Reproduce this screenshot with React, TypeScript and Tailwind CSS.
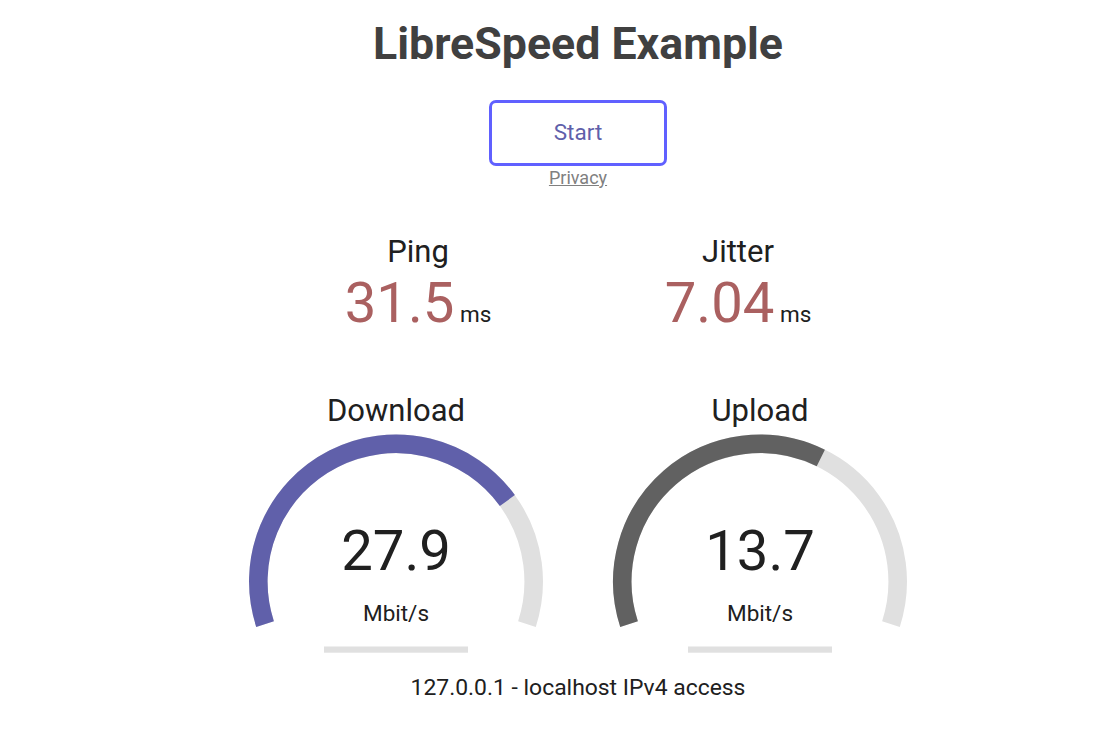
import React from 'react';

// mbps -> fraction of the meter, same curve as the speedtest page
const toAmount = (mbps: number) => 1 - 1 / Math.pow(1.3, Math.sqrt(mbps));

const W = 360;
const H = 281.25;
const scale = H * 0.0055;
const lw = 12 * scale;
const cx = W / 2;
const cy = H - 58 * scale;
const r = H / 1.8 - lw;

function arcPath(from: number, to: number) {
  const x0 = cx + r * Math.cos(from);
  const y0 = cy + r * Math.sin(from);
  const x1 = cx + r * Math.cos(to);
  const y1 = cy + r * Math.sin(to);
  const large = to - from > Math.PI ? 1 : 0;
  return `M ${x0} ${y0} A ${r} ${r} 0 ${large} 1 ${x1} ${y1}`;
}

function Meter({ amount, color }: { amount: number; color: string }) {
  const start = -Math.PI * 1.1;
  const end = Math.PI * 0.1;
  const fgEnd = amount * Math.PI * 1.2 - Math.PI * 1.1;
  return (
    <svg className="absolute inset-0" width={W} height={H} viewBox={`0 0 ${W} ${H}`}>
      <path d={arcPath(start, end)} fill="none" stroke="#E0E0E0" strokeWidth={lw} />
      <path d={arcPath(start, fgEnd)} fill="none" stroke={color} strokeWidth={lw} />
      <rect x={W * 0.3} y={H - 16 * scale} width={W * 0.4} height={4 * scale} fill="#E0E0E0" />
    </svg>
  );
}

function Gauge({ name, value, color }: { name: string; value: number; color: string }) {
  return (
    <div className="relative w-[360px] h-[281px]">
      <Meter amount={toAmount(value)} color={color} />
      <div className="relative">
        <div className="mt-[2px] text-[31px] leading-[37px]">{name}</div>
        <div className="mt-[89px] text-[56.25px] leading-[66px]">{value}</div>
        <div className="mt-[16px] leading-[26px]">Mbit/s</div>
      </div>
    </div>
  );
}

function SmallStat({ name, value }: { name: string; value: string }) {
  return (
    <div className="w-[315px] h-[157px]">
      <div className="text-[31px] leading-[37px]">{name}</div>
      <div className="leading-[66px]">
        <span className="text-[56.25px] text-[#AA6060]">{value}</span> <span>ms</span>
      </div>
    </div>
  );
}

export default function App() {
  return (
    <div className="w-full min-h-screen bg-white pl-[52px] pt-[18px] text-center text-[22.5px] text-[#202020] font-['Roboto',sans-serif]">
      <h1 className="text-[44.7px] leading-[52px] font-bold text-[#404040]">LibreSpeed Example</h1>

      <div className="mt-[30px] flex justify-center">
        <button className="w-[178px] h-[66px] border-[3px] border-[#6060FF] rounded-[7px] text-[#6060AA] text-[22.5px] flex items-center justify-center">
          Start
        </button>
      </div>
      <div className="mt-[2px] text-[18px] leading-[20px]">
        <a href="#" className="text-[#808080] underline">Privacy</a>
      </div>

      <div className="mt-[45px] flex justify-center gap-[5px]">
        <SmallStat name="Ping" value="31.5" />
        <SmallStat name="Jitter" value="7.04" />
      </div>

      <div className="flex justify-center gap-[4px]">
        <Gauge name="Download" value={27.9} color="#6060AA" />
        <Gauge name="Upload" value={13.7} color="#616161" />
      </div>

      <div className="mt-[4px] text-[22.9px] leading-[26px]">127.0.0.1 - localhost IPv4 access</div>
    </div>
  );
}
